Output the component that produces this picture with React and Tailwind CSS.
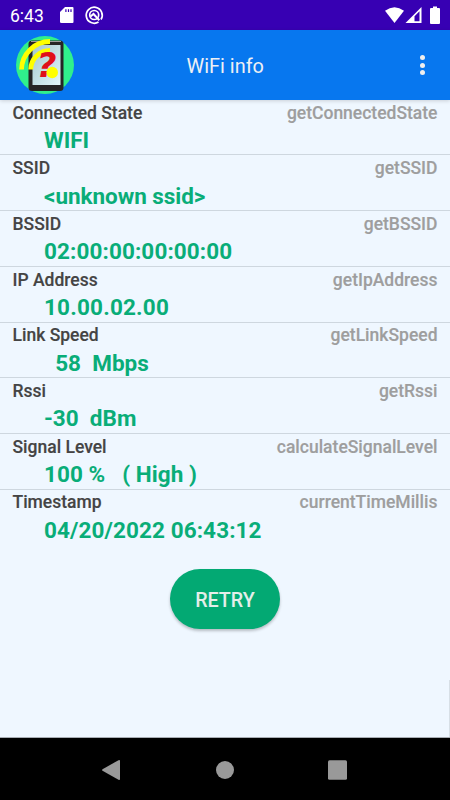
const rows = [
  { label: 'Connected State', method: 'getConnectedState', value: 'WIFI' },
  { label: 'SSID', method: 'getSSID', value: '<unknown ssid>', tracking: 'tracking-[-0.05px]' },
  { label: 'BSSID', method: 'getBSSID', value: '02:00:00:00:00:00', tracking: 'tracking-[0.1px]' },
  { label: 'IP Address', method: 'getIpAddress', value: '10.00.02.00', tracking: 'tracking-[0.2px]' },
  { label: 'Link Speed', method: 'getLinkSpeed', value: '  58  Mbps' },
  { label: 'Rssi', method: 'getRssi', value: '-30  dBm' },
  { label: 'Signal Level', method: 'calculateSignalLevel', value: '100 %   ( High )', tracking: 'tracking-[0.06px]' },
  { label: 'Timestamp', method: 'currentTimeMillis', value: '04/20/2022 06:43:12', tracking: 'tracking-[0.1px]' },
];

function StatusBar() {
  return (
    <div className="flex h-[30px] shrink-0 items-center bg-[#3700b3] pl-[10px] text-white">
      <span className="w-[50px] pt-px text-[17.5px] leading-[30px]">6:43</span>
      <svg className="h-[30px] w-[46px]" viewBox="60 0 46 30" fill="none">
        <path d="M65 7h7.5q1 0 1 1v14q0 1-1 1H61.500q-1.500 0-1.500-1V12z" fill="#fff" />
        <path d="M65.900 9.200v2.800M68.500 9.200v2.800M71 9.200v2.800" stroke="#3700b3" strokeWidth="1.200" />
        <path d="M101 19.500A8 8 0 1 0 98.500 22" stroke="#fff" strokeWidth="1.700" />
        <circle cx="94.200" cy="15" r="4.500" stroke="#fff" strokeWidth="1.700" />
        <path d="M90.500 16.500l3-2.500 5.800 6.300" stroke="#fff" strokeWidth="2" />
      </svg>
      <svg className="ml-auto h-[30px] w-[70px]" viewBox="380 0 70 30">
        <path d="M385 10.800Q394.500 3.500 404 10.800L394.500 23z" fill="#fff" />
        <path fillRule="evenodd" d="M405.500 23L421.500 7v16zM414.500 16.300V21.300H419.500V11.300z" fill="#fff" />
        <path d="M431 8h2V6.500h4V8h2q1 0 1 1v14q0 1-1 1h-8q-1 0-1-1V9q0-1 1-1z" fill="#fff" />
      </svg>
    </div>
  );
}

function AppLogo() {
  return (
    <svg className="h-[58px] w-[58px]" viewBox="16 36 58 58">
      <defs>
        <linearGradient id="screen" x1="0" y1="0" x2="1" y2="1">
          <stop offset="0" stopColor="#a4c7ce" />
          <stop offset="0.600" stopColor="#c8e4e9" />
          <stop offset="1" stopColor="#e3f7fa" />
        </linearGradient>
      </defs>
      <circle cx="45" cy="65" r="29" fill="#30f08c" />
      <rect x="28.500" y="40.500" width="35" height="50.500" rx="3.500" fill="#252525" />
      <path d="M31 41.500h30" stroke="#9b9b9b" strokeWidth="1" />
      <rect x="32.500" y="45" width="28" height="40" fill="url(#screen)" />
      <path d="M21.500 69.500A28.500 28.500 0 0 1 50 41.500" fill="none" stroke="#ffff00" strokeWidth="4.800" />
      <path d="M30.700 69.500A19.300 19.300 0 0 1 50 50.500" fill="none" stroke="#ffff00" strokeWidth="4.800" />
      <text x="36.500" y="77" fontFamily="DejaVu Sans" fontSize="34.500" fontWeight="700" fontStyle="italic" fill="#e00f1a">?</text>
      <circle cx="52.200" cy="72.500" r="5.800" fill="#ffff00" />
    </svg>
  );
}

function AppBar() {
  return (
    <header className="relative z-10 grid h-[70px] shrink-0 grid-cols-[1fr_auto_1fr] items-center bg-[#0777ef] pr-[25.500px] pl-4 shadow-[0_1px_4px_rgba(0,0,0,0.16)]">
      <AppLogo />
      <h1 className="mr-[-10px] pt-[3px] text-[19.900px] leading-6 text-[#eef0f4]">WiFi info</h1>
      <div className="flex flex-col gap-[2.500px] justify-self-end">
        <span className="size-[5px] rounded-full bg-[#eeeeee]" />
        <span className="size-[5px] rounded-full bg-[#eeeeee]" />
        <span className="size-[5px] rounded-full bg-[#eeeeee]" />
      </div>
    </header>
  );
}

function InfoRow({ label, method, value, tracking = '' }) {
  return (
    <div className="h-[55.680px] border-b border-[#ced7df] px-[12.500px] pt-[2.700px] last:border-transparent">
      <div className="flex justify-between text-[17.500px] leading-[21px] font-medium [-webkit-text-stroke-width:0.15px]">
        <span className="text-[#444444]">{label}</span>
        <span className="text-[#9e9e9e]">{method}</span>
      </div>
      <div className={`pt-[2.550px] pl-[31.500px] text-[22.500px] leading-[28px] font-bold whitespace-pre text-[#09ad78] ${tracking}`}>{value}</div>
    </div>
  );
}

export default function App() {
  return (
    <div className="flex h-[800px] w-[450px] flex-col overflow-hidden bg-[#eff7ff] font-[Roboto,sans-serif]">
      <StatusBar />
      <AppBar />
      <main className="flex flex-1 flex-col border-b border-[#a8adb3]">
        <section className="-mt-[0.200px]">
          {rows.map((row) => <InfoRow key={row.label} {...row} />)}
        </section>
        <button className="mt-[23.700px] h-[60px] w-[110px] self-center rounded-[30px] bg-[#03a973] pt-[3px] text-[19.700px] font-medium text-[#e4eee9] shadow-[0_2px_3px_rgba(0,0,0,0.24)]">RETRY</button>
        <div className="mt-auto h-[57px] w-px self-end bg-[#d7dfe6]" />
      </main>
      <nav className="h-[62px] shrink-0 bg-black">
        <svg className="h-full w-full" viewBox="0 738 450 62" fill="#999999">
          <path d="M102.500 769.200L118.500 760.200Q120 759.500 120 761V779Q120 780.500 118.500 779.800L102.500 770.800Q101.700 770 102.500 769.200z" />
          <circle cx="225" cy="770" r="9" />
          <rect x="328" y="760.300" width="19" height="19.400" rx="1.500" />
        </svg>
      </nav>
    </div>
  );
}
